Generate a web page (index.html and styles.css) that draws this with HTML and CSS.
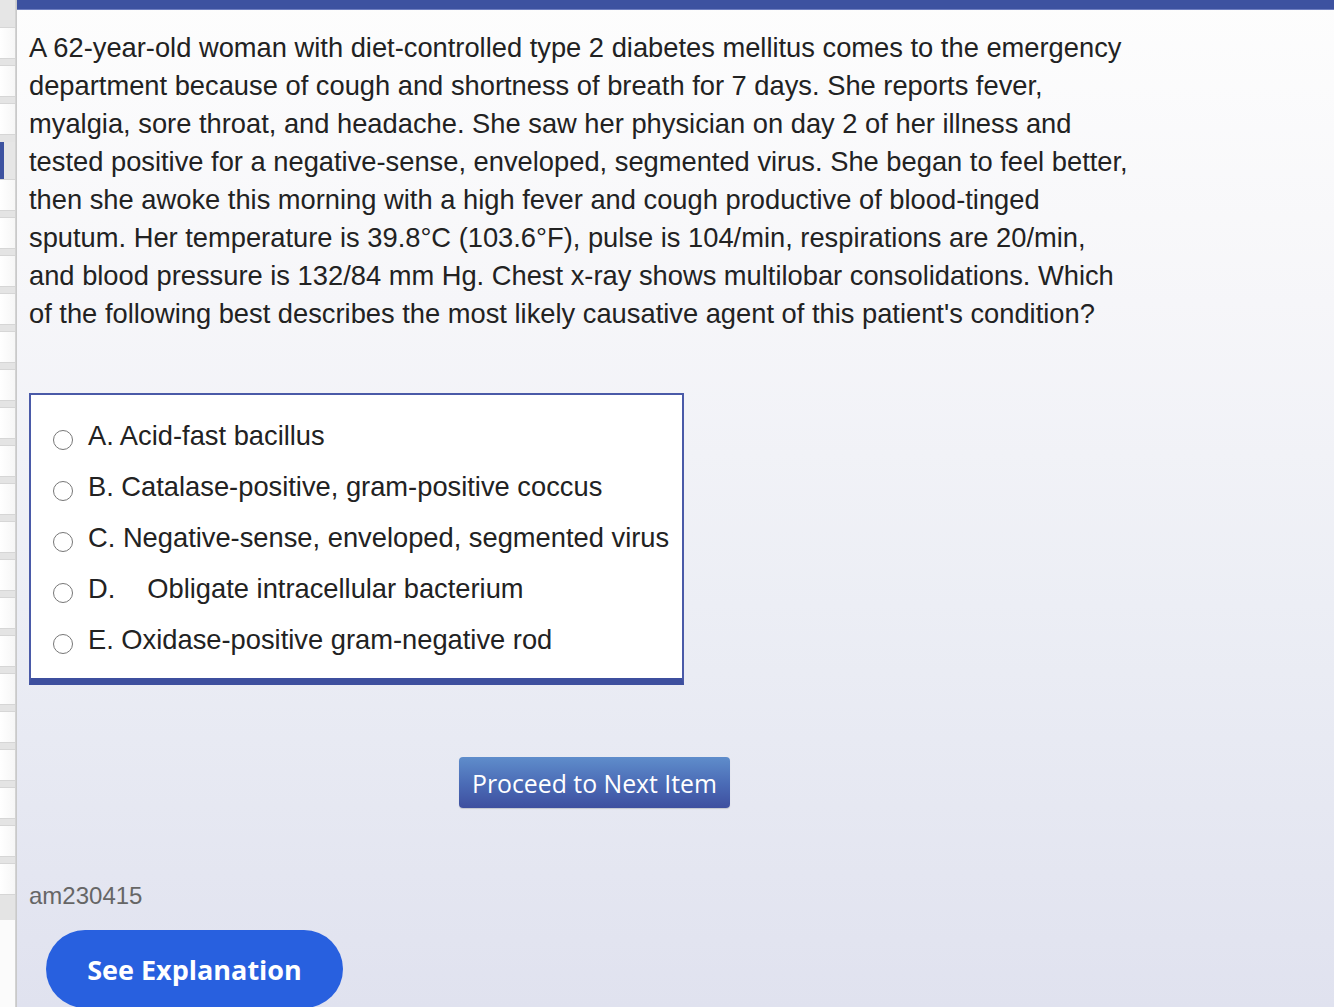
FILE: index.html
```html
<!DOCTYPE html>
<html>
<head>
<meta charset="utf-8">
<link rel="stylesheet" href="styles.css">
</head>
<body>
<div class="page">
  <aside class="strip">
    <div class="cells">
      <div class="cell top"></div>
      <div class="cell"></div>
      <div class="cell"></div>
      <div class="cell"></div>
      <div class="cell active"></div>
      <div class="cell"></div>
      <div class="cell"></div>
      <div class="cell"></div>
      <div class="cell"></div>
      <div class="cell"></div>
      <div class="cell"></div>
      <div class="cell"></div>
      <div class="cell"></div>
      <div class="cell"></div>
      <div class="cell"></div>
      <div class="cell"></div>
      <div class="cell"></div>
      <div class="cell"></div>
      <div class="cell"></div>
      <div class="cell"></div>
      <div class="cell"></div>
      <div class="cell"></div>
      <div class="cell"></div>
      <div class="cell"></div>
    </div>
  </aside>
  <div class="divider"></div>
  <main class="main">
    <div class="topbar"></div>
    <div class="content">
      <p class="stem">A 62-year-old woman with diet-controlled type 2 diabetes mellitus comes to the emergency department because of cough and shortness of breath for 7 days. She reports fever, myalgia, sore throat, and headache. She saw her physician on day 2 of her illness and tested positive for a negative-sense, enveloped, segmented virus. She began to feel better, then she awoke this morning with a high fever and cough productive of blood-tinged sputum. Her temperature is 39.8°C (103.6°F), pulse is 104/min, respirations are 20/min, and blood pressure is 132/84 mm Hg. Chest x-ray shows multilobar consolidations. Which of the following best describes the most likely causative agent of this patient's condition?</p>
      <div class="options">
        <label class="option"><span class="radio"></span><span class="otext">A. Acid-fast bacillus</span></label>
        <label class="option"><span class="radio"></span><span class="otext">B. Catalase-positive, gram-positive coccus</span></label>
        <label class="option"><span class="radio"></span><span class="otext">C. Negative-sense, enveloped, segmented virus</span></label>
        <label class="option"><span class="radio"></span><span class="otext">D.<span class="wide-gap"></span>Obligate intracellular bacterium</span></label>
        <label class="option"><span class="radio"></span><span class="otext">E. Oxidase-positive gram-negative rod</span></label>
      </div>
      <div class="next-row">
        <button class="next-btn">Proceed to Next Item</button>
      </div>
      <div class="qid">am230415</div>
    </div>
    <button class="explain-btn">See Explanation</button>
  </main>
</div>
</body>
</html>
```

FILE: styles.css
```css
html, body {
  margin: 0;
  padding: 0;
  height: 100%;
  overflow: hidden;
}
body {
  font-family: "Liberation Sans", Arial, sans-serif;
  color: #222;
  background: #ffffff;
}
.page {
  display: flex;
  height: 1007px;
}
.strip {
  width: 15px;
  flex: none;
  background: #fbfbfb;
}
.cells {
  display: flex;
  flex-direction: column;
  height: 920px;
  overflow: hidden;
  background: #e4e4e4;
}
.cell {
  flex: none;
  height: 30px;
  margin-bottom: 8px;
  background: linear-gradient(90deg, #ffffff 0%, #f6f6f6 100%);
  box-shadow: 0 -1px 0 #d6d6d6, 0 1px 0 #d6d6d6;
}
.cell.top {
  height: 20px;
  margin-bottom: 8px;
  background: #e6e6e6;
  box-shadow: none;
}
.cell.active {
  height: 38px;
  margin-bottom: 0;
  background: linear-gradient(90deg, #3d52a0 0 4px, #e6e6e6 4px);
  box-shadow: none;
}
.divider {
  width: 2px;
  flex: none;
  background: linear-gradient(90deg, #d8d8d8, #c4c4c4);
}
.main {
  flex: 1;
  display: flex;
  flex-direction: column;
  background: linear-gradient(180deg, #fdfdfd 0%, #f6f6f9 30%, #eceef5 60%, #e0e2ef 100%);
}
.topbar {
  height: 10px;
  flex: none;
  background: #3d52a0;
  box-shadow: inset 0 -1px 0 #6f7fc0;
}
.content {
  padding: 19px 0 0 12px;
  width: 1131px;
}
.stem {
  margin: 0;
  font-size: 27.3px;
  line-height: 38px;
  width: 1100px;
}
.options {
  margin-top: 60px;
  width: 651px;
  background: #fff;
  border: 2px solid #4a5aa8;
  border-bottom: 7px solid #3d4f9e;
  padding: 15px 0 13px 0;
}
.option {
  display: flex;
  align-items: center;
  height: 51px;
  font-size: 27.3px;
}
.radio {
  flex: none;
  width: 18px;
  height: 18px;
  border: 1.6px solid #777;
  border-radius: 50%;
  background: #fff;
  margin: 8px 15px 0 22px;
}
.otext {
  white-space: nowrap;
}
.wide-gap {
  display: inline-block;
  width: 32px;
}
.next-row {
  display: flex;
  justify-content: center;
  margin-top: 72px;
}
.next-btn {
  width: 271px;
  height: 51px;
  border: none;
  border-radius: 4px;
  background: linear-gradient(180deg, #5f8dcb 0%, #4a6ab5 55%, #3e4f9f 100%);
  color: #fff;
  font-family: "Open Sans", sans-serif;
  font-size: 24.8px;
  font-weight: 400;
  padding: 0;
  box-shadow: 0 1px 1px rgba(0,0,0,0.15);
}
.qid {
  margin-top: 74px;
  font-size: 24px;
  color: #666;
  line-height: 28px;
}
.explain-btn {
  align-self: flex-start;
  margin: 20px 0 0 29px;
  width: 297px;
  height: 78px;
  flex: none;
  border: none;
  border-radius: 39px;
  background: #2860df;
  color: #fff;
  font-family: "Open Sans", sans-serif;
  font-weight: 700;
  font-size: 27px;
  padding: 0;
}
```
